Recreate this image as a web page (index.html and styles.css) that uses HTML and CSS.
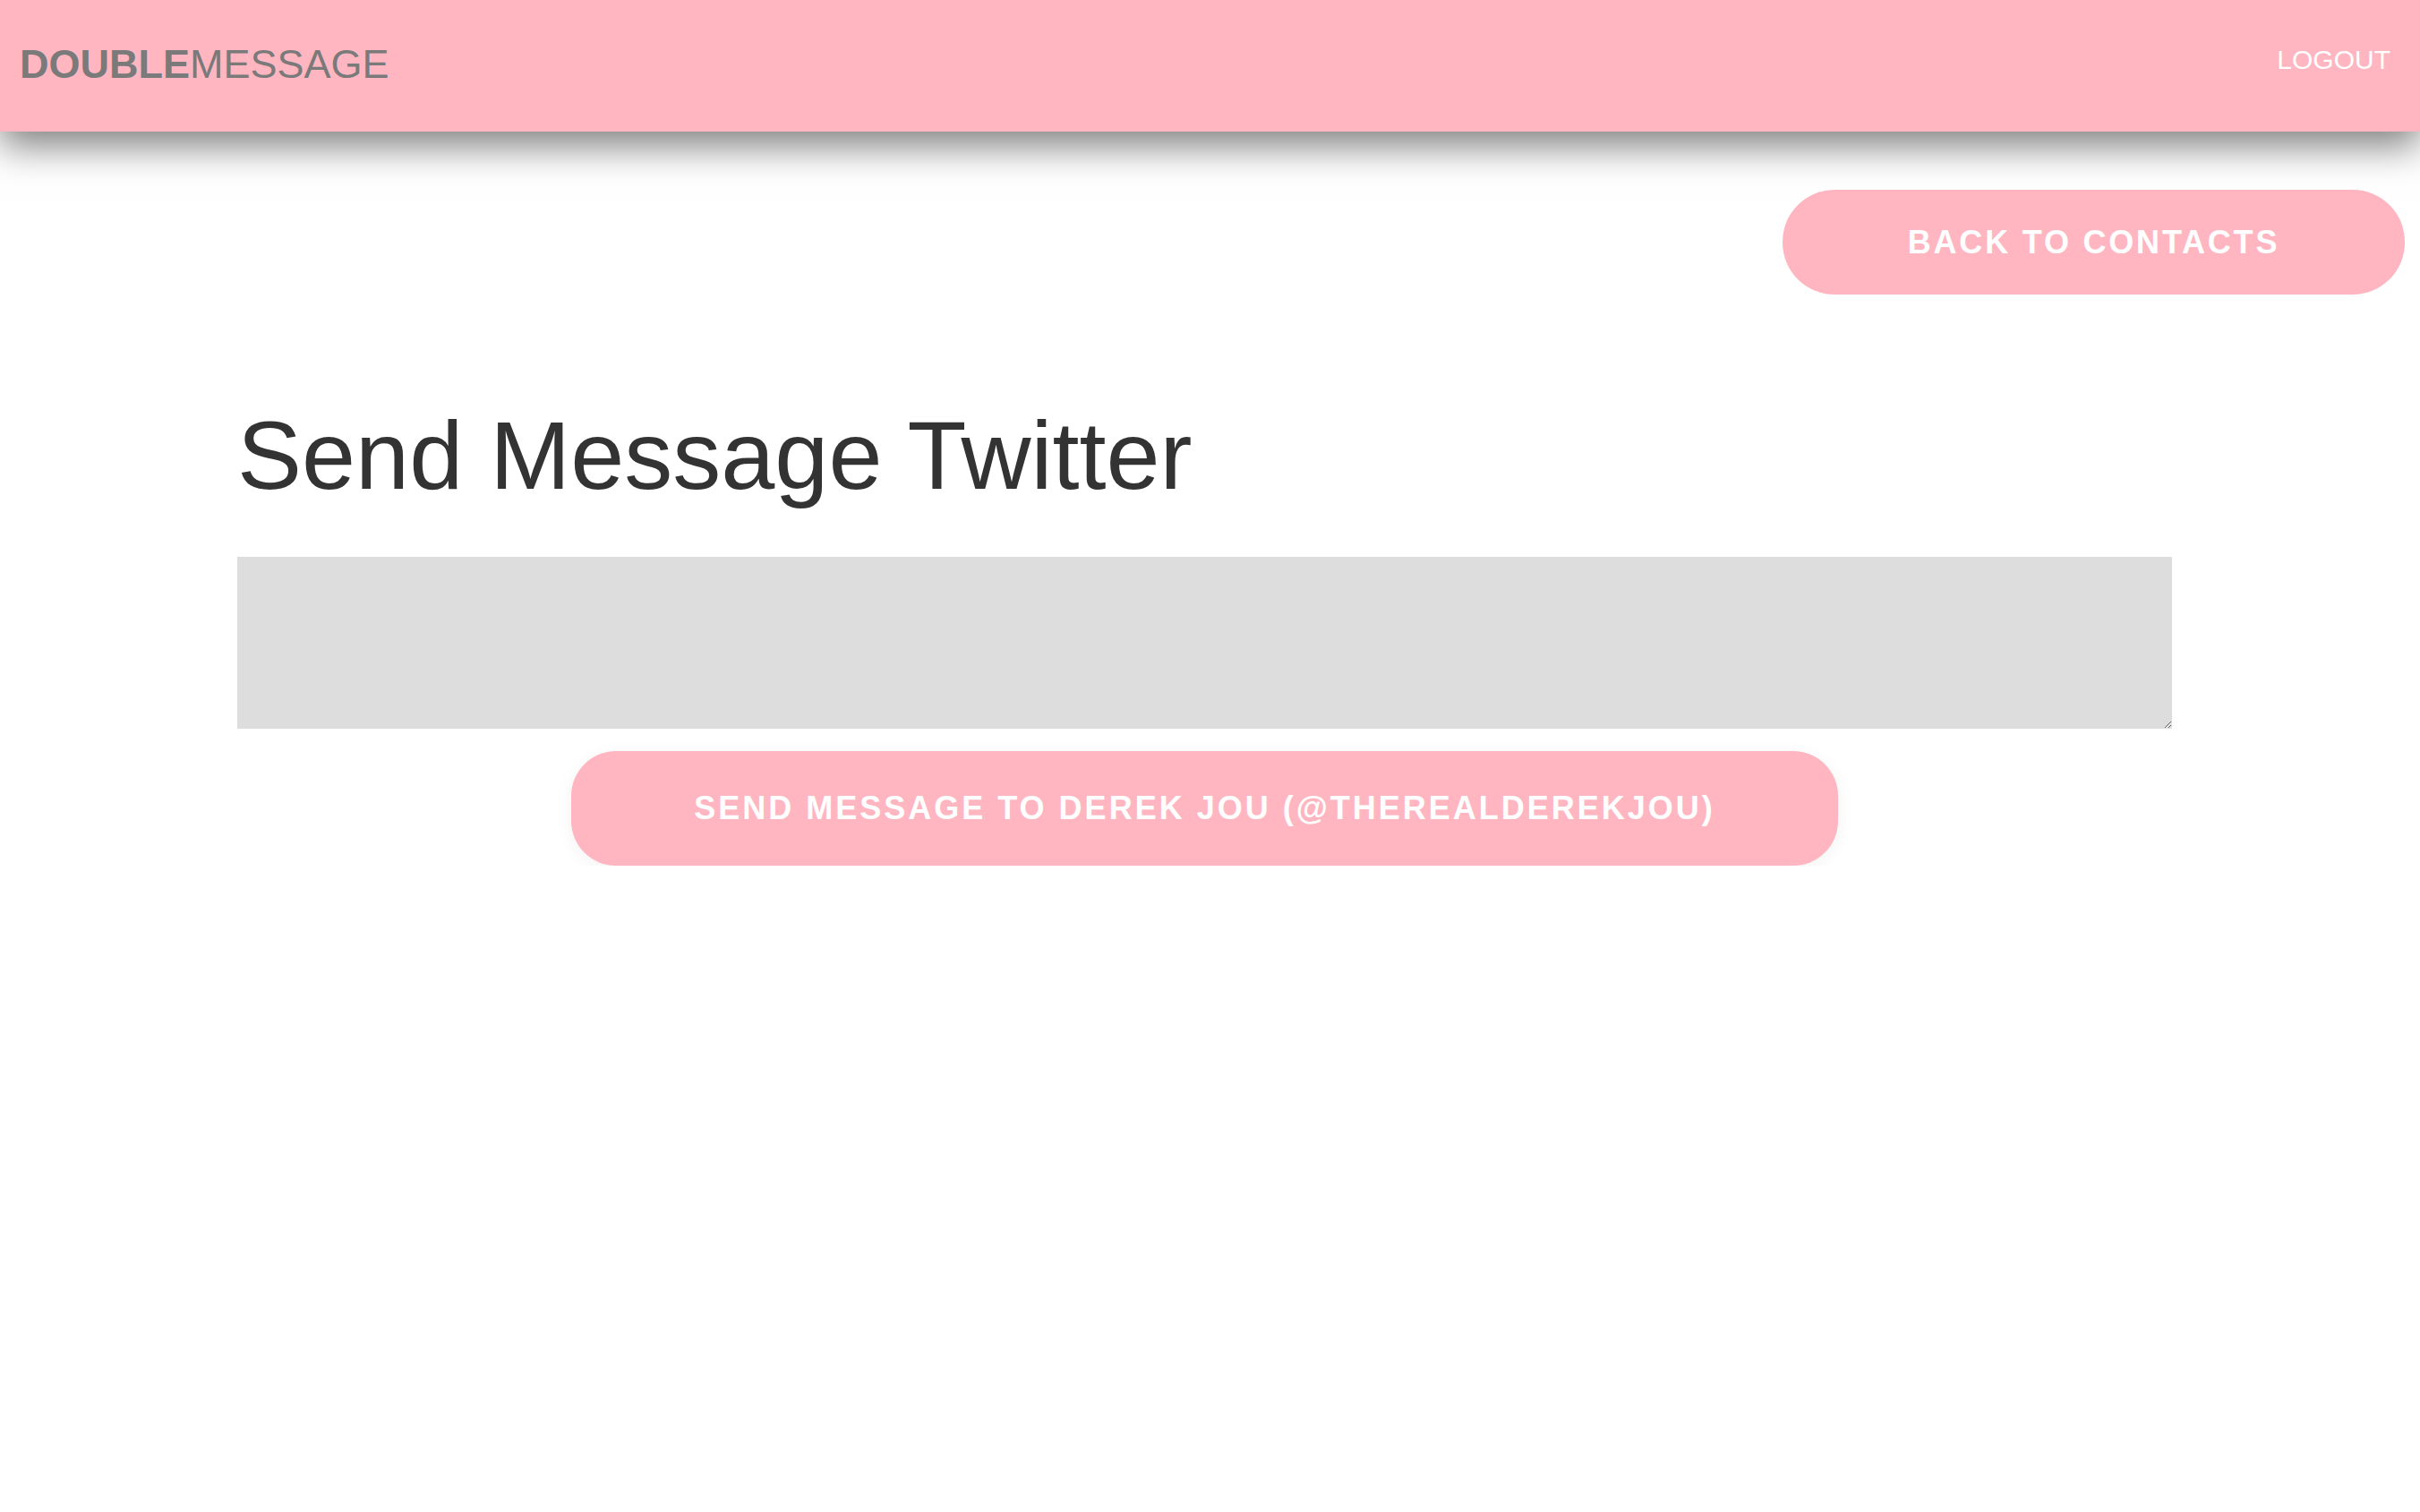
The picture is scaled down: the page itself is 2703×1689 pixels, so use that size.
FILE: index.html
```html
<!DOCTYPE html>
<html lang="en">
<head>
<meta charset="utf-8">
<title>DoubleMessage</title>
<link rel="stylesheet" href="styles.css">
</head>
<body>
<header class="topbar">
  <a class="brand" href="#"><span class="brand-bold">DOUBLE</span>MESSAGE</a>
  <a class="logout" href="#">LOGOUT</a>
</header>
<div class="actions">
  <button class="pill-btn back-btn">BACK TO CONTACTS</button>
</div>
<main class="content">
  <h1 class="title">Send Message Twitter</h1>
  <textarea class="message"></textarea>
  <div class="send-row">
    <button class="pill-btn send-btn">SEND MESSAGE TO DEREK JOU (@THEREALDEREKJOU)</button>
  </div>
</main>
</body>
</html>
```
FILE: styles.css
```css
html, body {
  margin: 0;
  padding: 0;
  background: #ffffff;
  font-family: "Liberation Sans", Arial, sans-serif;
}

.topbar {
  box-sizing: border-box;
  height: 147px;
  background: #ffb6c1;
  display: flex;
  justify-content: space-between;
  align-items: flex-start;
  padding: 46px 33px 0 22px;
  box-shadow: 0 16px 40px rgba(0, 0, 0, 0.5);
  position: relative;
  z-index: 1;
}

.brand {
  font-size: 45px;
  color: #7a7a7a;
  text-decoration: none;
  line-height: normal;
}

.brand-bold {
  font-weight: bold;
}

.logout {
  font-size: 30px;
  color: #ffffff;
  text-decoration: none;
  margin-top: 4px;
  line-height: normal;
}

.actions {
  display: flex;
  justify-content: flex-end;
  padding: 65px 17px 0 0;
}

.pill-btn {
  background: #ffb6c1;
  color: #ffffff;
  border: none;
  font-family: "Liberation Sans", Arial, sans-serif;
  font-weight: bold;
  font-size: 36px;
  letter-spacing: 2.8px;
  cursor: pointer;
}

.back-btn {
  width: 695px;
  height: 117px;
  border-radius: 58px;
  padding: 0;
}

.content {
  width: 2161px;
  margin-left: 265px;
}

.title {
  margin: 118px 0 0 0;
  font-size: 108px;
  font-weight: normal;
  line-height: 1.15;
  color: #333333;
}

.message {
  display: block;
  box-sizing: border-box;
  width: 100%;
  height: 192px;
  margin-top: 51px;
  background: #dddddd;
  border: none;
  outline: none;
}

.send-row {
  display: flex;
  justify-content: center;
  margin-top: 25px;
}

.send-btn {
  width: 1415px;
  height: 128px;
  border-radius: 50px;
  padding: 0;
  letter-spacing: 3px;
  box-shadow: 0 4px 20px rgba(0, 0, 0, 0.05);
}
```
